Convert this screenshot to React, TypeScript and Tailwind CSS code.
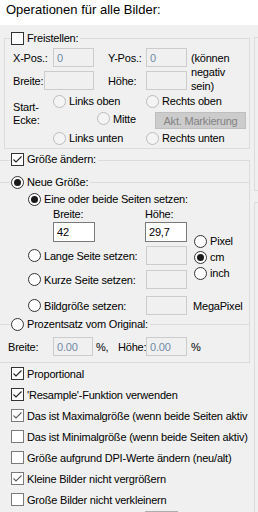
import { ReactNode } from 'react'

function Check({ checked, light }: { checked?: boolean; light?: boolean }) {
  return (
    <span
      className={`flex h-[13px] w-[13px] shrink-0 items-center justify-center border bg-white ${
        light ? 'border-[#7a7a7a]' : 'border-[#333333]'
      }`}
    >
      {checked && (
        <svg width="11" height="11" viewBox="0 0 11 11">
          <path d="M1.5 5.5 L4 8 L9.5 2.5" fill="none" stroke={light ? '#606060' : '#222222'} strokeWidth="1.1" />
        </svg>
      )}
    </span>
  )
}

function Radio({ checked, disabled }: { checked?: boolean; disabled?: boolean }) {
  return (
    <span
      className={`flex h-[13px] w-[13px] shrink-0 items-center justify-center rounded-full border ${
        disabled ? 'border-[#bcbcbc] bg-[#f4f4f4]' : 'border-[#333333] bg-white'
      }`}
    >
      {checked && <span className="h-[7px] w-[7px] rounded-full bg-[#1a1a1a]" />}
    </span>
  )
}

function Opt({ label, checked, disabled, className = '' }: { label: string; checked?: boolean; disabled?: boolean; className?: string }) {
  return (
    <div className={`flex shrink-0 items-center gap-[3px] whitespace-nowrap ${className}`}>
      <Radio checked={checked} disabled={disabled} />
      <span>{label}</span>
    </div>
  )
}

function Field({ value = '', on, className }: { value?: string; on?: boolean; className: string }) {
  return (
    <div
      className={`flex shrink-0 items-center border pl-[3px] ${
        on ? 'border-[#7a7a7a] bg-white text-black' : 'border-[#cccccc] bg-[#f0f0f0] text-[#6f8aa6]'
      } ${className}`}
    >
      {value}
    </div>
  )
}

// group header sitting on the top border line
function Legend({ children, className = '' }: { children: ReactNode; className?: string }) {
  return (
    <div className={`flex h-[14px] w-fit items-center gap-[3px] whitespace-nowrap bg-[#f0f0f0] pr-[2px] ${className}`}>
      {children}
    </div>
  )
}

const options: { label: string; checked: boolean; light: boolean }[] = [
  { label: 'Proportional', checked: true, light: false },
  { label: "'Resample'-Funktion verwenden", checked: true, light: false },
  { label: 'Das ist Maximalgröße (wenn beide Seiten aktiv', checked: true, light: true },
  { label: 'Das ist Minimalgröße (wenn beide Seiten aktiv)', checked: false, light: true },
  { label: 'Größe aufgrund DPI-Werte ändern (neu/alt)', checked: false, light: true },
  { label: 'Kleine Bilder nicht vergrößern', checked: true, light: true },
  { label: 'Große Bilder nicht verkleinern', checked: false, light: true },
]

export default function App() {
  return (
    <div className="h-[512px] w-[258px] overflow-hidden bg-[#f0f0f0] font-['Liberation_Sans',Arial,sans-serif] text-[11px] leading-[14px] tracking-[-0.2px] text-black">
      <div className="h-[25px] bg-white pl-[6px] pt-[2px] text-[13px] leading-[16px] tracking-normal">
        Operationen für alle Bilder:
      </div>

      <div className="flex h-[487px]">
        <div className="flex w-[254px] shrink-0 flex-col">
          {/* Freistellen */}
          <div className="ml-[4px] mt-[13px] h-[111px] w-[246px] shrink-0 border border-[#dcdcdc]">
            <Legend className="-mt-[8px] ml-[6px]">
              <Check />
              <span>Freistellen:</span>
            </Legend>

            <div className="ml-[8px] mt-[3px] flex items-start">
              <div className="flex flex-col gap-[4px]">
                <div className="flex h-[19px] items-center">
                  <span className="w-[40px]">X-Pos.:</span>
                  <Field value="0" className="h-[19px] w-[41px]" />
                  <span className="ml-[14px] w-[38px]">Y-Pos.:</span>
                  <Field value="0" className="h-[19px] w-[41px]" />
                </div>
                <div className="flex h-[19px] items-center">
                  <span className="w-[31px]">Breite:</span>
                  <Field className="h-[19px] w-[50px]" />
                  <span className="ml-[14px] w-[38px]">Höhe:</span>
                  <Field className="h-[19px] w-[41px]" />
                </div>
              </div>
              <div className="ml-[4px] pt-[3px]">
                <div>(können</div>
                <div>negativ</div>
                <div>sein)</div>
              </div>
            </div>

            <div className="ml-[8px] flex">
              <div className="w-[40px] pt-[8px] leading-[13px]">
                <div>Start-</div>
                <div>Ecke:</div>
              </div>
              <div className="flex flex-col">
                <div className="flex h-[16px] items-center">
                  <Opt label="Links oben" disabled className="w-[93px]" />
                  <Opt label="Rechts oben" disabled />
                </div>
                <div className="flex h-[21px] items-center">
                  <Opt label="Mitte" disabled className="mb-[2px] ml-[44px] w-[58px]" />
                  <div className="mt-[2px] flex h-[17px] w-[91px] items-center justify-center border border-[#bfbfbf] bg-[#cccccc] text-[#838383]">
                    Akt. Markierung
                  </div>
                </div>
                <div className="flex h-[16px] items-center">
                  <Opt label="Links unten" disabled className="w-[93px]" />
                  <Opt label="Rechts unten" disabled />
                </div>
              </div>
            </div>
          </div>

          {/* Größe ändern */}
          <div className="mt-[11px] h-[203px] w-[250px] shrink-0 border-y border-r border-[#dcdcdc]">
            <Legend className="-mt-[9px] ml-[11px]">
              <Check checked />
              <span>Größe ändern:</span>
            </Legend>

            <div className="mt-[16px] border-t border-[#dcdcdc]">
              <Legend className="-mt-[8px] ml-[11px]">
                <Radio checked />
                <span>Neue Größe:</span>
              </Legend>

              <Opt label="Eine oder beide Seiten setzen:" checked className="ml-[28px] mt-[3px] h-[14px]" />

              <div className="flex">
                <div className="flex w-[194px] shrink-0 flex-col">
                  <div className="flex h-[16px] items-center">
                    <span className="ml-[53px] w-[92px]">Breite:</span>
                    <span>Höhe:</span>
                  </div>
                  <div className="flex h-[20px]">
                    <Field value="42" on className="ml-[53px] h-[20px] w-[42px]" />
                    <Field value="29,7" on className="ml-[50px] h-[20px] w-[42px]" />
                  </div>
                  <div className="mt-[4px] flex h-[19px] items-center">
                    <Opt label="Lange Seite setzen:" className="ml-[28px] w-[118px]" />
                    <Field className="h-[19px] w-[41px]" />
                  </div>
                  <div className="mt-[5px] flex h-[19px] items-center">
                    <Opt label="Kurze Seite setzen:" className="ml-[28px] w-[118px]" />
                    <Field className="h-[19px] w-[41px]" />
                  </div>
                </div>
                <div className="flex flex-col pt-[27px]">
                  <Opt label="Pixel" className="h-[16px]" />
                  <Opt label="cm" checked className="h-[16px]" />
                  <Opt label="inch" className="h-[16px]" />
                </div>
              </div>

              <div className="mt-[7px] flex h-[19px] items-center whitespace-nowrap">
                <Opt label="Bildgröße setzen:" className="ml-[28px] w-[118px]" />
                <Field className="h-[19px] w-[41px]" />
                <span className="ml-[6px]">MegaPixel</span>
              </div>
            </div>

            <div className="mt-[9px] border-t border-[#dcdcdc]">
              <Legend className="-mt-[8px] ml-[11px]">
                <Radio />
                <span>Prozentsatz vom Original:</span>
              </Legend>
              <div className="mt-[6px] flex h-[19px] items-center whitespace-nowrap">
                <span className="ml-[8px] w-[45px]">Breite:</span>
                <Field value="0.00" className="h-[19px] w-[40px]" />
                <span className="ml-[3px] w-[22px]">%,</span>
                <span className="w-[28px]">Höhe:</span>
                <Field value="0.00" className="h-[19px] w-[41px]" />
                <span className="ml-[4px]">%</span>
              </div>
            </div>
          </div>

          {options.map((o) => (
            <div key={o.label} className="ml-[11px] flex h-[21px] shrink-0 items-center gap-[3px] whitespace-nowrap">
              <Check checked={o.checked} light={o.light} />
              <span>{o.label}</span>
            </div>
          ))}
          <div className="ml-[145px] mt-[1px] h-[1px] w-[33px] shrink-0 bg-[#adadad]" />
        </div>

        {/* neighbouring panel, cut off at the edge */}
        <div className="flex flex-1 flex-col">
          <div className="mt-[12px] h-[154px] border-y border-l border-[#dcdcdc]" />
          <div className="mt-[11px] flex-1 border-l border-t border-[#dcdcdc]" />
        </div>
      </div>
    </div>
  )
}
